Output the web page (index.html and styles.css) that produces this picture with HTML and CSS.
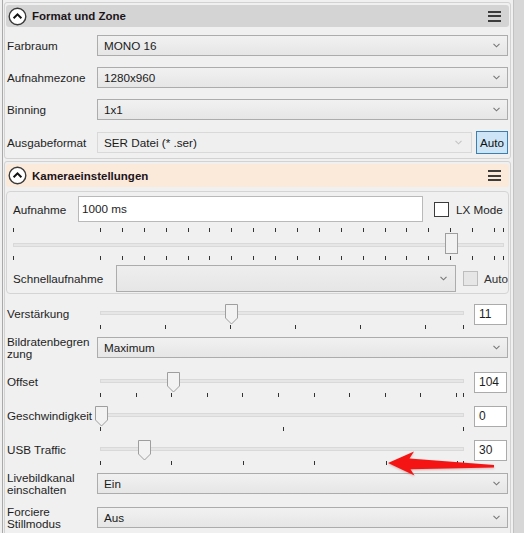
FILE: index.html
```html
<!DOCTYPE html>
<html lang="de">
<head>
    <meta charset="UTF-8">
    <title>Kamera</title>
    <link rel="stylesheet" href="styles.css">
</head>
<body>
<div class="frame">
    <div class="panel">
        <!-- Format und Zone -->
        <div class="section">
            <div class="head head-gray">
                <svg class="fold" width="19" height="19" viewBox="0 0 19 19"><circle cx="9.5" cy="9.5" r="8.3" fill="#fff" stroke="#3a3a3a" stroke-width="1.4"/><path d="M5.6 11.2L9.5 7.3L13.4 11.2" fill="none" stroke="#111" stroke-width="2"/></svg>
                <span class="head-title">Format und Zone</span>
                <span class="menu"><i></i><i></i><i></i></span>
            </div>
            <div class="rows">
                <div class="row">
                    <span class="lbl">Farbraum</span>
                    <div class="combo"><span>MONO 16</span><svg class="chev" width="7" height="5" viewBox="0 0 7 5"><path d="M0.5 0.8L3.5 3.8L6.5 0.8" fill="none" stroke="#777" stroke-width="1.1"/></svg></div>
                </div>
                <div class="row">
                    <span class="lbl">Aufnahmezone</span>
                    <div class="combo"><span>1280x960</span><svg class="chev" width="7" height="5" viewBox="0 0 7 5"><path d="M0.5 0.8L3.5 3.8L6.5 0.8" fill="none" stroke="#777" stroke-width="1.1"/></svg></div>
                </div>
                <div class="row">
                    <span class="lbl">Binning</span>
                    <div class="combo"><span>1x1</span><svg class="chev" width="7" height="5" viewBox="0 0 7 5"><path d="M0.5 0.8L3.5 3.8L6.5 0.8" fill="none" stroke="#777" stroke-width="1.1"/></svg></div>
                </div>
                <div class="row">
                    <span class="lbl">Ausgabeformat</span>
                    <div class="combo combo-off"><span>SER Datei (* .ser)</span><svg class="chev" width="7" height="5" viewBox="0 0 7 5"><path d="M0.5 0.8L3.5 3.8L6.5 0.8" fill="none" stroke="#c4c4c4" stroke-width="1.1"/></svg></div>
                    <button class="btn-auto">Auto</button>
                </div>
            </div>
        </div>

        <!-- Kameraeinstellungen -->
        <div class="section">
            <div class="head head-peach">
                <svg class="fold" width="19" height="19" viewBox="0 0 19 19"><circle cx="9.5" cy="9.5" r="8.3" fill="#fff" stroke="#3a3a3a" stroke-width="1.4"/><path d="M5.6 11.2L9.5 7.3L13.4 11.2" fill="none" stroke="#111" stroke-width="2"/></svg>
                <span class="head-title">Kameraeinstellungen</span>
                <span class="menu"><i></i><i></i><i></i></span>
            </div>

            <div class="group">
                <div class="g-row">
                    <span class="g-lbl">Aufnahme</span>
                    <div class="textbox">1000 ms</div>
                    <span class="check"></span>
                    <span class="check-lbl">LX Mode</span>
                </div>
                <div class="wslider">
                    <div class="wticks">
                        <i></i>
                        <span class="wticks-run"><i></i><i></i><i></i><i></i><i></i><i></i><i></i><i></i><i></i><i></i><i></i><i></i><i></i><i></i><i></i><i></i><i></i><i></i><i></i></span>
                        <i class="end"></i>
                    </div>
                    <div class="wtrack-area">
                        <div class="track"></div>
                        <svg class="thumb" style="left: 432px" width="13" height="21" viewBox="0 0 13 21"><rect x="0.5" y="0.5" width="12" height="20" fill="#f2f2f2" stroke="#9e9e9e"/></svg>
                    </div>
                    <div class="wticks">
                        <i></i>
                        <span class="wticks-run"><i></i><i></i><i></i><i></i><i></i><i></i><i></i><i></i><i></i><i></i><i></i><i></i><i></i><i></i><i></i><i></i><i></i><i></i><i></i></span>
                        <i class="end"></i>
                    </div>
                </div>
                <div class="g-row g-row-fast">
                    <span class="g-lbl g-lbl-wide">Schnellaufnahme</span>
                    <div class="combo combo-big"><span></span><svg class="chev" width="7" height="5" viewBox="0 0 7 5"><path d="M0.5 0.8L3.5 3.8L6.5 0.8" fill="none" stroke="#777" stroke-width="1.1"/></svg></div>
                    <span class="check check-off"></span>
                    <span class="check-lbl check-lbl-fast">Auto</span>
                </div>
            </div>

            <div class="srow">
                <span class="lbl">Verstärkung</span>
                <div class="slide">
                    <div class="track"></div>
                    <div class="ticks">
                        <span class="ticks-run run-gain"><i></i><i></i><i></i><i></i><i></i><i></i></span>
                        <i></i>
                    </div>
                    <svg class="thumb" style="left: 130px" width="13" height="21" viewBox="0 0 13 21"><path d="M0.5 0.5H12.5V14L6.5 20L0.5 14Z" fill="#f2f2f2" stroke="#9e9e9e"/></svg>
                </div>
                <div class="numbox">11</div>
            </div>

            <div class="row row-tall">
                <span class="lbl lbl-wrap">Bildratenbegrenzung</span>
                <div class="combo"><span>Maximum</span><svg class="chev" width="7" height="5" viewBox="0 0 7 5"><path d="M0.5 0.8L3.5 3.8L6.5 0.8" fill="none" stroke="#777" stroke-width="1.1"/></svg></div>
            </div>

            <div class="srow">
                <span class="lbl">Offset</span>
                <div class="slide">
                    <div class="track"></div>
                    <div class="ticks">
                        <span class="ticks-run run-offset"><i></i><i></i><i></i><i></i><i></i><i></i><i></i><i></i><i></i><i></i><i></i></span>
                        <i></i>
                    </div>
                    <svg class="thumb" style="left: 72px" width="13" height="21" viewBox="0 0 13 21"><path d="M0.5 0.5H12.5V14L6.5 20L0.5 14Z" fill="#f2f2f2" stroke="#9e9e9e"/></svg>
                </div>
                <div class="numbox">104</div>
            </div>

            <div class="srow">
                <span class="lbl">Geschwindigkeit</span>
                <div class="slide">
                    <div class="track"></div>
                    <div class="ticks">
                        <span class="ticks-run run-speed"><i></i><i></i></span>
                        <i></i>
                    </div>
                    <svg class="thumb" style="left: 0px" width="13" height="21" viewBox="0 0 13 21"><path d="M0.5 0.5H12.5V14L6.5 20L0.5 14Z" fill="#f2f2f2" stroke="#9e9e9e"/></svg>
                </div>
                <div class="numbox">0</div>
            </div>

            <div class="srow">
                <span class="lbl">USB Traffic</span>
                <div class="slide">
                    <div class="track"></div>
                    <div class="ticks">
                        <span class="ticks-run run-usb"><i></i><i></i><i></i><i></i><i></i><i></i></span>
                        <i></i>
                    </div>
                    <svg class="thumb" style="left: 43px" width="13" height="21" viewBox="0 0 13 21"><path d="M0.5 0.5H12.5V14L6.5 20L0.5 14Z" fill="#f2f2f2" stroke="#9e9e9e"/></svg>
                </div>
                <div class="numbox">30</div>
            </div>

            <div class="row row-tall">
                <span class="lbl lbl-wrap">Livebildkanal einschalten</span>
                <div class="combo"><span>Ein</span><svg class="chev" width="7" height="5" viewBox="0 0 7 5"><path d="M0.5 0.8L3.5 3.8L6.5 0.8" fill="none" stroke="#777" stroke-width="1.1"/></svg></div>
            </div>

            <div class="row row-tall">
                <span class="lbl lbl-wrap">Forciere Stillmodus</span>
                <div class="combo"><span>Aus</span><svg class="chev" width="7" height="5" viewBox="0 0 7 5"><path d="M0.5 0.8L3.5 3.8L6.5 0.8" fill="none" stroke="#777" stroke-width="1.1"/></svg></div>
            </div>
        </div>
    </div>
    <div class="scroll"></div>
</div>

<!-- red marker arrow drawn over the screenshot -->
<svg class="arrow" width="524" height="533" viewBox="0 0 524 533">
    <path d="M388 463L414 451.5L409.5 458.6L494 465L494 467.6L410.5 469.2L414.5 475.5Z" fill="#f51414"/>
</svg>
</body>
</html>
```

FILE: styles.css
```css
*{
    margin: 0;
    padding: 0;
    box-sizing: border-box;
}
body{
    width: 524px;
    height: 533px;
    overflow: hidden;
    position: relative;
    background-color: #f0f0f0;
    font-family: "Liberation Sans", Arial, sans-serif;
    font-size: 11.7px;
    color: #1e1e1e;
}
.frame{
    display: flex;
    height: 533px;
}
.panel{
    flex: 1;
    margin-left: 2px;
    border-left: 1px solid #a9a9a9;
}
.scroll{
    width: 11px;
    background-color: #d7d7d7;
    border-left: 1px solid #c2c2c2;
}

/* sections */
.section{
    margin: 2px 2px 0 1px;
    border: 1px solid #d2d2d2;
    border-radius: 3px;
}
.head{
    display: flex;
    align-items: center;
    height: 22px;
    margin: 2px 1px 0;
    padding: 0 8px 0 2px;
    border-radius: 3px;
}
.head-gray{
    background-color: #d4d4d4;
}
.head-peach{
    height: 23px;
    background-color: #fbe9da;
}
.fold{
    display: block;
}
.head-title{
    margin-left: 5px;
    font-size: 11.5px;
    font-weight: bold;
    color: #1c141a;
}
.menu{
    margin-left: auto;
    display: flex;
    flex-direction: column;
    gap: 2.5px;
}
.menu i{
    display: block;
    width: 13px;
    height: 2px;
    background-color: #3c3c3c;
}

/* label + combo rows */
.rows{
    display: flex;
    flex-direction: column;
    gap: 11px;
    padding: 8px 2px 4px;
}
.row{
    display: flex;
    align-items: center;
}
.row-tall{
    align-items: flex-start;
    height: 34px;
    padding: 0 2px;
}
.lbl{
    width: 90px;
    flex-shrink: 0;
}
.lbl-wrap{
    line-height: 12px;
    margin-top: -1px;
    padding-right: 2px;
    overflow-wrap: anywhere;
}
.combo{
    flex: 1;
    display: flex;
    align-items: center;
    justify-content: space-between;
    height: 21px;
    padding: 0 7px 0 6px;
    border: 1px solid #acacac;
    background: linear-gradient(#f1f1f1, #e6e6e6);
    color: #1a1a1a;
}
.combo-off{
    border-color: #d9d9d9;
    background: #efefef;
    padding-right: 9px;
}
.chev{
    display: block;
}
.btn-auto{
    width: 32px;
    height: 23px;
    margin-left: 4px;
    border: 1px solid #3c7fb1;
    background-color: #cde5f7;
    font-family: inherit;
    font-size: 11.7px;
    color: #111;
}

/* group box */
.group{
    margin: 4px 1px 9px;
    padding-bottom: 1px;
    border: 1px solid #d4d4d4;
    border-radius: 4px;
    overflow: hidden;
}
.g-row{
    display: flex;
    align-items: center;
    padding: 4px 0 0 6px;
}
.g-row-fast{
    padding-top: 5px;
}
.g-lbl{
    width: 65px;
    flex-shrink: 0;
}
.g-lbl-wide{
    width: 103px;
}
.textbox{
    width: 345px;
    height: 26px;
    padding: 0 3px;
    line-height: 24px;
    background-color: #fff;
    border: 1px solid #b9b9b9;
}
.check{
    width: 15px;
    height: 15px;
    margin-left: 11px;
    flex-shrink: 0;
    background-color: #fff;
    border: 1px solid #3a3a3a;
}
.check-off{
    margin-left: 7px;
    background-color: #e6e6e6;
    border-color: #bdbdbd;
}
.check-lbl{
    margin-left: 7px;
    white-space: nowrap;
}
.check-lbl-fast{
    margin-left: 6px;
    color: #333;
}
.combo-big{
    flex: none;
    width: 340px;
    height: 27px;
    padding-right: 8px;
    background: linear-gradient(#eeeeee, #e6e6e6);
}

/* sliders */
.track{
    height: 4px;
    background-color: #e6e6e6;
    border: 1px solid #d9d9d9;
}
.thumb{
    position: absolute;
    top: 1px;
    display: block;
}
.wslider{
    margin-top: 6px;
    padding: 0 4px 0 6px;
}
.wticks,
.ticks{
    display: flex;
    justify-content: space-between;
    height: 4px;
}
.wticks i,
.ticks i{
    display: block;
    flex-shrink: 0;
    width: 1px;
    height: 4px;
    background-color: #333;
}
.wticks-run,
.ticks-run{
    display: flex;
}
.wticks-run{
    gap: 20.9px;
    margin-left: 86px;
    margin-right: auto;
}
.wtrack-area{
    position: relative;
    height: 24px;
    padding-top: 11px;
}
.srow{
    display: flex;
    align-items: flex-start;
    height: 34px;
    padding: 0 2px;
}
.srow .lbl{
    width: 88px;
    line-height: 22px;
}
.slide{
    position: relative;
    width: 375px;
    height: 34px;
    padding: 8px 6px 0 5px;
}
.ticks{
    margin-top: 10px;
}
.run-gain{
    gap: 64px;
}
.run-offset{
    gap: 34.6px;
}
.run-speed{
    gap: 182px;
}
.run-usb{
    gap: 70.4px;
}
.numbox{
    width: 33px;
    height: 21px;
    margin: 1px 0 0 4px;
    padding: 0 4px;
    line-height: 19px;
    background-color: #fff;
    border: 1px solid #ababab;
    font-size: 12px;
}

.arrow{
    position: absolute;
    left: 0;
    top: 0;
    pointer-events: none;
    filter: drop-shadow(0 1px 1px rgba(120, 0, 0, 0.25));
}
```
